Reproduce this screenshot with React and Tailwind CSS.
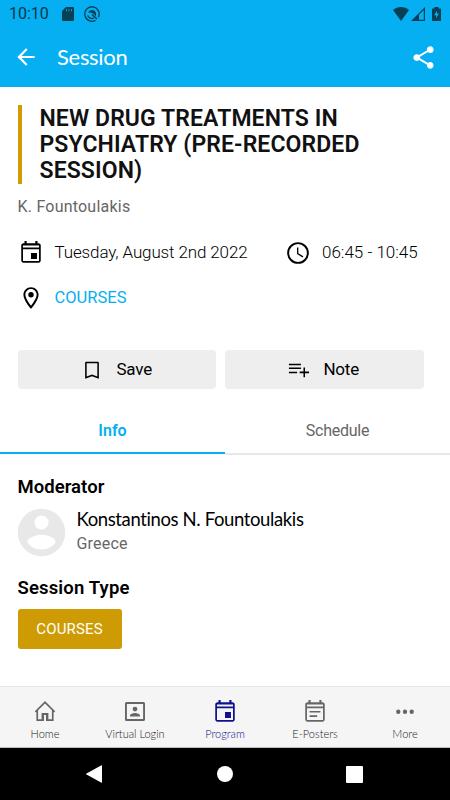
const paths = {
  back: "M20 11H7.83l5.59-5.59L12 4l-8 8 8 8 1.41-1.41L7.83 13H20v-2z",
  share: "M18 16.08c-.76 0-1.44.3-1.96.77L8.91 12.7c.05-.23.09-.46.09-.7s-.04-.47-.09-.7l7.05-4.11c.54.5 1.25.81 2.04.81 1.66 0 3-1.34 3-3s-1.34-3-3-3-3 1.34-3 3c0 .24.04.47.09.7L8.04 9.81C7.5 9.31 6.79 9 6 9c-1.66 0-3 1.34-3 3s1.34 3 3 3c.79 0 1.5-.31 2.04-.81l7.12 4.16c-.05.21-.08.43-.08.65 0 1.61 1.31 2.92 2.92 2.92s2.92-1.31 2.92-2.92-1.31-2.92-2.92-2.92z",
  event: "M17.500 12h-5.500v5.500h5.500v-5.500zM16 1v2H8V1H6v2H5c-1.11 0-2 .9-2 2v14c0 1.1.89 2 2 2h14c1.1 0 2-.9 2-2V5c0-1.1-.9-2-2-2h-1V1h-2zM4.600 5h14.800v2H4.600V5zm14.800 14.400H4.600V8.600h14.800v10.800z",
  note: "M16 1v2H8V1H6v2H5c-1.11 0-2 .9-2 2v14c0 1.1.89 2 2 2h14c1.1 0 2-.9 2-2V5c0-1.1-.9-2-2-2h-1V1h-2zM4.600 5h14.800v2H4.600V5zm14.800 14.400H4.600V8.600h14.800v10.800zM7 11h10v1.500H7V11zm0 4h7v1.500H7V15z",
  clock: "M12 2a10 10 0 1 0 0 20 10 10 0 0 0 0-20zm0 18.200a8.200 8.200 0 1 1 0-16.400 8.200 8.200 0 0 1 0 16.400zm.3-13.200H11.100v6l5.150 3.050.65-1.08-4.600-2.72V7z",
  place: "M12 2C8.13 2 5 5.13 5 9c0 5.25 7 13 7 13s7-7.75 7-13c0-3.87-3.13-7-7-7zM6.800 9c0-2.76 2.340-5.200 5.200-5.200s5.200 2.440 5.200 5.200c0 2.88-3.080 7.490-5.200 10.180C9.88 16.510 6.800 11.850 6.800 9zm5.200-2.5a2.5 2.5 0 1 0 0 5 2.5 2.5 0 0 0 0-5z",
  bookmark: "M18.500 3H5.500c-.6 0-1 .4-1 1v17.500l7.500-2.800 7.500 2.800V4c0-.6-.4-1-1-1zm-.7 16L12 16.800l-5.800 2.200V4.700h11.600v14.300z",
  addNote: "M14.500 10H2v1.600h12.500V10zm0-4H2v1.600h12.500V6zm4.300 8v-4h-1.600v4.200h-4v1.600h4V20h1.600v-4.200H23v-1.600h-4.200zM2 14.400h8.500V16H2v-1.600z",
  avatar: "M12 2a10 10 0 1 0 0 20 10 10 0 0 0 0-20zm0 2.8a3 3 0 1 1 0 6 3 3 0 0 1 0-6zm0 14.4c-2.5 0-4.71-1.28-6-3.22.03-1.99 4-3.08 6-3.08 1.99 0 5.97 1.09 6 3.08-1.29 1.94-3.5 3.22-6 3.22z",
  home: "M12 1L1.800 11.200l1.200 1.200.4-.4V21h7.600v-6h2v6h7.600v-9l.4.4 1.200-1.200L12 1zm6.900 18.300h-3.500v-6.300H8.600v6.300H5.100V10.200L12 3.500l6.900 6.700v9.100z",
  login: "M20.500 2h-17A1.500 1.500 0 0 0 2 3.500v16A1.500 1.500 0 0 0 3.500 21h17a1.500 1.500 0 0 0 1.500-1.500v-16A1.500 1.500 0 0 0 20.500 2zm-.4 17.100H3.900V3.900h16.200v15.200zM12 11.500a2.400 2.400 0 1 0 0-4.800 2.400 2.400 0 0 0 0 4.800zm5 5v-.75c0-1.700-3-2.650-5-2.650s-5 .95-5 2.650v.75h10z",
  more: "M5.800 9.800a2 2 0 1 0 0 4 2 2 0 0 0 0-4zm6.200 0a2 2 0 1 0 0 4 2 2 0 0 0 0-4zm6.200 0a2 2 0 1 0 0 4 2 2 0 0 0 0-4z",
};

function Icon({ name, className }) {
  return (
    <svg viewBox="0 0 24 24" fill="currentColor" fillRule="evenodd" className={`shrink-0 ${className}`}>
      <path d={paths[name]} />
    </svg>
  );
}

const navItems = [
  { icon: "home", label: "Home" },
  { icon: "login", label: "Virtual Login" },
  { icon: "event", label: "Program", active: true },
  { icon: "note", label: "E-Posters" },
  { icon: "more", label: "More" },
];

function StatusBar() {
  return (
    <div className="flex h-[27px] items-center pl-[9px] pr-[9px] text-[#064055]">
      <span className="w-[53px] text-[16px] leading-none text-[#05384c]">10:10</span>
      <svg viewBox="0 0 12 14" className="h-[14px] w-3" fill="currentColor">
        <path d="M4 0h7a1 1 0 0 1 1 1v12a1 1 0 0 1-1 1H1a1 1 0 0 1-1-1V4z" />
        <path d="M4.5 2v2.5M7 2v2.5M9.5 2v2.5" stroke="#05aff2" strokeWidth=".8" />
      </svg>
      <svg viewBox="0 0 16 16" className="ml-[10px] h-4 w-4" fill="none" stroke="currentColor">
        <path d="M11.500 14.300A7.200 7.200 0 1 1 14.500 11.100" strokeWidth="1.400" />
        <path d="M3.700 9.500A4.500 4.500 0 0 0 10 12" strokeWidth="1.200" />
        <path d="M8 8.500L13 13" strokeWidth="1.500" />
        <path d="M4 6.500C6 3 10.500 3 12 7v3.500C10 7 7 6 4 6.500z" fill="currentColor" stroke="none" />
      </svg>
      <svg viewBox="0 0 16 14" className="ml-auto h-[14px] w-4" fill="currentColor">
        <path d="M0 3c4.5-4 11.500-4 16 0L8 14z" />
      </svg>
      <svg viewBox="0 0 14 14" className="ml-[2px] h-[14px] w-[14px]" fill="currentColor">
        <path fillRule="evenodd" d="M14 0v14H0zM12.800 3L8 7.800v5h4.800z" />
      </svg>
      <svg viewBox="0 0 9 14" className="ml-[7px] h-[14px] w-[9px]" fill="currentColor">
        <path d="M2.500 0h4v1.500H9V14H0V1.500h2.500z" />
        <path d="M5 3.500L2.200 8.200h1.900v3.300l2.800-4.900H5z" fill="#05aff2" />
      </svg>
    </div>
  );
}

function App() {
  return (
    <div className="flex h-[800px] w-[450px] flex-col overflow-hidden bg-white font-['Roboto',sans-serif] text-black">
      <header className="h-[87px] bg-[#05aff2]">
        <StatusBar />
        <div className="flex h-[60px] items-center pl-[13px] pr-[13.5px] text-white">
          <Icon name="back" className="h-[26px] w-[26px]" />
          <h1 className="ml-[18px] font-['Lato',sans-serif] text-[22px] leading-none tracking-[-0.3px]">Session</h1>
          <Icon name="share" className="ml-auto h-[27px] w-[27px]" />
        </div>
      </header>

      <main className="h-[599px]">
        <section className="px-[17.5px] pt-[18px]">
          <h2 className="h-[79px] border-l-4 border-[#d29b03] pl-[18px] pt-[0.7px] text-[23px] font-semibold leading-[26.33px] tracking-[0.1px] text-[#111]">
            NEW DRUG TREATMENTS IN<br />PSYCHIATRY (PRE-RECORDED<br />SESSION)
          </h2>
          <p className="mt-[13px] text-[16px] leading-5 tracking-[0.22px] text-[#666]">K. Fountoulakis</p>

          <div className="mt-[23px] flex h-[26px] items-center text-[17px]">
            <Icon name="event" className="h-[26px] w-[26px]" />
            <span className="ml-[11px] w-[230px] font-light tracking-[-0.13px]">Tuesday, August 2nd 2022</span>
            <Icon name="clock" className="h-[26px] w-[26px]" />
            <span className="ml-[11.5px] font-light">06:45 - 10:45</span>
          </div>
          <div className="mt-[19px] flex h-[26px] items-center">
            <Icon name="place" className="h-[26px] w-[26px]" />
            <span className="ml-[11px] text-[16.5px] text-[#05aff2]">COURSES</span>
          </div>

          <div className="mr-[9px] mt-[39px] grid grid-cols-2 gap-[9px] text-[17px] tracking-[-0.2px]">
            <button className="flex h-[39px] items-center justify-center gap-[13px] rounded bg-[#eee]">
              <Icon name="bookmark" className="h-[22px] w-[22px]" />
              Save
            </button>
            <button className="flex h-[39px] items-center justify-center gap-[13px] rounded bg-[#eee] pr-[2px]">
              <Icon name="addNote" className="h-[23px] w-[23px]" />
              Note
            </button>
          </div>
        </section>

        <div className="mt-[19px] grid h-[47px] grid-cols-2 text-center text-[16px]">
          <div className="h-[46px] border-b-2 border-[#05aff2] pt-[11px] font-semibold text-[#05aff2]">Info</div>
          <div className="border-b-2 border-[#e7e8ea] pt-[11px] tracking-[-0.25px] text-[#666]">Schedule</div>
        </div>

        <section className="px-[17.5px] pt-[19.5px]">
          <h3 className="text-[18.5px] font-semibold leading-6 tracking-[0.05px]">Moderator</h3>
          <div className="mt-[10px] flex h-12 items-center">
            <span className="flex h-12 w-12 items-center justify-center">
              <Icon name="avatar" className="h-[57px] w-[57px] text-[#e8e8e8]" />
            </span>
            <div className="-mt-[3px] ml-[11px]">
              <p className="font-['Lato',sans-serif] text-[18.5px] leading-[25px] tracking-[-0.38px]">Konstantinos N. Fountoulakis</p>
              <p className="text-[16px] leading-6 tracking-[0.2px] text-[#666]">Greece</p>
            </div>
          </div>
          <h3 className="mt-[19px] text-[18.5px] font-semibold leading-6 tracking-[0.15px]">Session Type</h3>
          <span className="mt-[9px] flex h-10 w-[104px] items-center justify-center rounded-[3px] bg-[#ce9b04] pt-px text-[15px] tracking-[0.15px] text-white">
            COURSES
          </span>
        </section>
      </main>

      <nav className="grid h-[62px] grid-cols-5 border-b border-t border-b-[#bbb] border-t-[#e5e5e5] bg-[#f5f5f5]">
        {navItems.map(item => (
          <div
            key={item.label}
            className={`flex flex-col items-center pt-[12px] ${item.active ? "text-[#10108c]" : "text-[#666]"}`}
          >
            <Icon
              name={item.icon}
              className={item.icon === "home" || item.icon === "login" ? "mb-[1px] mt-[1px] h-6 w-6" : "h-[26px] w-[26px]"}
            />
            <span className={`mt-[2px] font-['Lato',sans-serif] text-[11px] font-light leading-[14px] ${item.active ? "" : "text-[#222]"}`}>
              {item.label}
            </span>
          </div>
        ))}
      </nav>

      <footer className="flex h-[52px] items-center bg-black pl-[86px] text-white">
        <svg viewBox="0 0 16 18" className="h-[18px] w-4" fill="currentColor">
          <path d="M16 1v16q0 1-1 .5L.5 9.500q-.7-.5 0-1L15 .5q1-.5 1 .5z" />
        </svg>
        <span className="ml-[115px] h-4 w-4 rounded-full bg-white" />
        <span className="ml-[113px] h-[17px] w-[17px] rounded-[1px] bg-white" />
      </footer>
    </div>
  );
}

export default App;
